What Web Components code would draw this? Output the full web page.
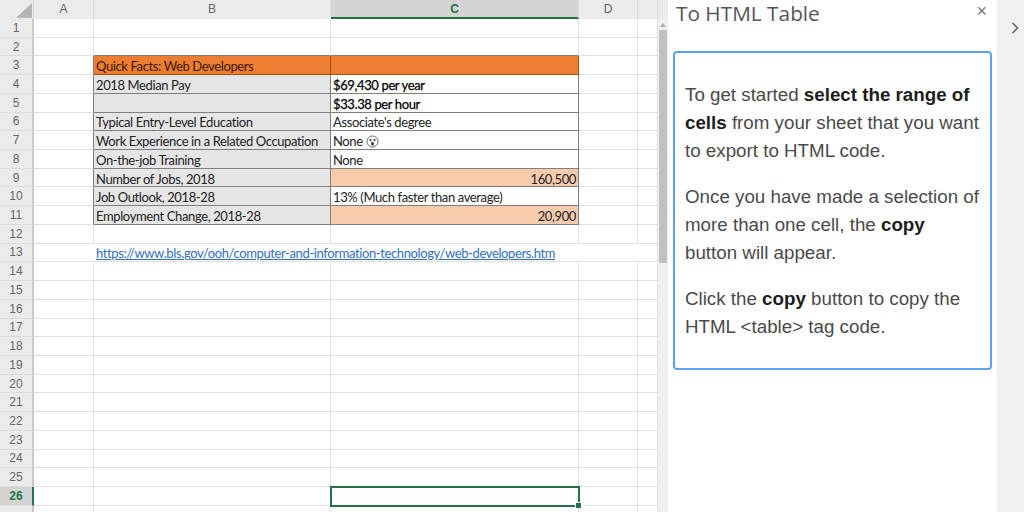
<!DOCTYPE html>
<html lang="en">
<head>
<meta charset="utf-8">
<title>To HTML Table</title>
<style>
  html, body { margin: 0; height: 100%; overflow: hidden; background: #fff; }
  info-card b { color: #1d1d1d; }
</style>
</head>
<body>
<app-shell>
  <sheet-view slot="sheet"></sheet-view>
  <task-pane slot="pane" heading="To HTML Table">
    <info-card>
      <p>To get started <b>select the range of cells</b> from your sheet that you want to export to HTML code.</p>
      <p>Once you have made a selection of more than one cell, the <b>copy</b> button will appear.</p>
      <p>Click the <b>copy</b> button to copy the HTML &lt;table&gt; tag code.</p>
    </info-card>
  </task-pane>
</app-shell>

<script>
/** Top level frame: sheet on the left, pane next to it, grey strip on the right. */
class AppShell extends HTMLElement {
  constructor() {
    super();
    this.attachShadow({ mode: "open" }).innerHTML = `
      <style>
        :host { display: flex; width: 1024px; height: 512px; overflow: hidden; }
        .strip {
          flex: 1;
          background: #f0f0f0;
          display: flex;
          justify-content: center;
          padding-top: 21px;
          align-items: flex-start;
        }
        .strip svg { margin-left: 9px; }
      </style>
      <slot name="sheet"></slot>
      <slot name="pane"></slot>
      <div class="strip">
        <svg width="8" height="14" viewBox="0 0 8 14" fill="none" stroke="#666" stroke-width="1.6"><path d="M1.5 2l5 5-5 5"/></svg>
      </div>
    `;
  }
}

const COLUMNS = [
  { name: "A", width: 60 },
  { name: "B", width: 237 },
  { name: "C", width: 248 },
  { name: "D", width: 59 },
  { name: "", width: 20 },
];

// row number -> column letter -> cell
const CELLS = {
  3: { B: { text: "Quick Facts: Web Developers", cls: "head" }, C: { cls: "head" } },
  4: { B: { text: "2018 Median Pay", cls: "label" }, C: { text: "$69,430 per year", cls: "strong" } },
  5: { B: { cls: "label" }, C: { text: "$33.38 per hour", cls: "strong" } },
  6: { B: { text: "Typical Entry-Level Education", cls: "label" }, C: { text: "Associate's degree", cls: "value" } },
  7: { B: { text: "Work Experience in a Related Occupation", cls: "label" }, C: { text: "None", cls: "value", face: true } },
  8: { B: { text: "On-the-job Training", cls: "label" }, C: { text: "None", cls: "value" } },
  9: { B: { text: "Number of Jobs, 2018", cls: "label" }, C: { text: "160,500", cls: "peach" } },
  10: { B: { text: "Job Outlook, 2018-28", cls: "label" }, C: { text: "13% (Much faster than average)", cls: "value" } },
  11: { B: { text: "Employment Change, 2018-28", cls: "label" }, C: { text: "20,900", cls: "peach" } },
  13: { B: { text: "https://www.bls.gov/ooh/computer-and-information-technology/web-developers.htm", cls: "link" } },
};

const FACE = `<svg class="face" width="13" height="13" viewBox="0 0 13 13" fill="none" stroke="#666" stroke-width="1">
  <circle cx="6.5" cy="6.5" r="5.5"/><circle cx="4.5" cy="5" r="1.1" fill="#333" stroke="none"/>
  <circle cx="8.5" cy="5" r="1.1" fill="#333" stroke="none"/><ellipse cx="6.5" cy="8.7" rx="1.5" ry="2" fill="#444" stroke="none"/>
</svg>`;

/** The spreadsheet: headers, gridlines, cells and the scrollbar. */
class SheetView extends HTMLElement {
  constructor() {
    super();
    this.attachShadow({ mode: "open" }).innerHTML = `
      <style>
        :host { display: flex; width: 668px; height: 512px; overflow: hidden; background: #fff; }
        * { box-sizing: border-box; }
        .grid {
          display: grid;
          width: 658px;
          grid-template-columns: 34px ${COLUMNS.map(c => c.width + "px").join(" ")};
          grid-template-rows: 19px repeat(27, 18.72px);
          font: 13px/18px Lato, "Open Sans", sans-serif;
          letter-spacing: -0.38px;
          color: #222;
        }
        .corner, .col, .row {
          background: #ebebeb;
          font-family: "Liberation Sans", sans-serif;
          font-size: 12px;
          letter-spacing: 0;
          color: #666;
          display: flex;
          align-items: center;
          justify-content: center;
        }
        .corner { position: relative; border-right: 1px solid #dcdcdc; }
        .corner svg { position: absolute; right: 1px; bottom: 1px; }
        .col { border-right: 1px solid #dedede; padding-bottom: 2px; }
        .col.on {
          background: #d4d4d4;
          color: #217346;
          font-weight: bold;
          border-bottom: 2px solid #217346;
          padding-bottom: 0;
        }
        .row { border-right: 2px solid #c8c8c8; border-bottom: 1px solid #dcdcdc; }
        .row.on { background: #d4d4d4; color: #217346; font-weight: bold; border-right-color: #217346; }
        .cell {
          position: relative;
          border-right: 1px solid #e0e0e0;
          border-bottom: 1px solid #e0e0e0;
          padding: 2px 2px 0;
          white-space: nowrap;
          display: flex;
          align-items: center;
          min-width: 0;
        }
        .table-edge { border-right-color: #7f7f7f; }
        .table-top { border-bottom-color: #7f7f7f; }
        .head { background: #ed7d31; border-color: #a9500f; color: #3a1a05; }
        .label { background: #e5e5e5; border-color: #7f7f7f; }
        .value { border-color: #7f7f7f; }
        .strong { border-color: #7f7f7f; color: #000; -webkit-text-stroke: 0.25px #000; }
        .peach { background: #f8cbad; border-color: #7f7f7f; justify-content: flex-end; }
        .link { color: #2f6fc4; text-decoration: underline; }
        .open { border-right-color: transparent; }
        .face { margin-left: 3px; }
        .picked { outline: 2px solid #217346; outline-offset: -1px; z-index: 1; }
        .picked i {
          position: absolute;
          right: -3px;
          bottom: -3px;
          width: 5px;
          height: 5px;
          background: #217346;
          outline: 1px solid #fff;
        }
        .bar { width: 10px; background: #f0f0f0; display: flex; flex-direction: column; align-items: center; }
        .bar .top { height: 19px; width: 100%; background: #ebebeb; }
        .bar svg { margin: 4px 0 3px; }
        .thumb { width: 8px; height: 233px; background: #c0c0c0; }
      </style>
      <div class="grid"></div>
      <div class="bar">
        <div class="top"></div>
        <svg width="6" height="4" viewBox="0 0 6 4"><path d="M3 0l3 4H0z" fill="#aaa"/></svg>
        <div class="thumb"></div>
      </div>
    `;
    this.renderGrid(this.shadowRoot.querySelector(".grid"));
  }

  /**
   * Fills the grid, one header row then 27 data rows.
   * @private
   */
  renderGrid(grid) {
    let html = `<div class="corner"><svg width="16" height="15"><path d="M16 0v15H0z" fill="#b4b4b4"/></svg></div>`;
    html += COLUMNS.map(c => `<div class="col ${c.name === "C" ? "on" : ""}">${c.name}</div>`).join("");

    for (let row = 1; row <= 26; row++) {
      html += `<div class="row ${row === 26 ? "on" : ""}">${row}</div>`;
      COLUMNS.forEach((col, i) => {
        const data = (CELLS[row] || {})[col.name] || {};
        const classes = ["cell"];
        if (data.cls) classes.push(data.cls);
        if (row >= 3 && row <= 11 && col.name === "A") classes.push("table-edge");
        if (row === 2 && (col.name === "B" || col.name === "C")) classes.push("table-top");
        if (row === 13 && i < 4) classes.push("open");
        if (row === 26 && col.name === "C") classes.push("picked");
        const inner = (data.text || "") + (data.face ? FACE : "") + (classes.includes("picked") ? "<i></i>" : "");
        html += `<div class="${classes.join(" ")}">${inner}</div>`;
      });
    }
    // bottom row is clipped by the window, so no number is drawn in it
    html += `<div class="row"></div>` + COLUMNS.map(() => `<div class="cell"></div>`).join("");
    grid.innerHTML = html;
  }
}

/** Side pane with a title, a close button and slotted content. */
class TaskPane extends HTMLElement {
  constructor() {
    super();
    this.attachShadow({ mode: "open" }).innerHTML = `
      <style>
        :host {
          display: flex;
          flex-direction: column;
          box-sizing: border-box;
          width: 329px;
          height: 512px;
          padding: 0 5px;
          background: #fff;
        }
        header {
          display: flex;
          justify-content: space-between;
          align-items: flex-start;
          height: 51px;
          padding: 0 5px 0 3px;
        }
        h1 {
          margin: 0;
          font: 400 20.8px/26px "Open Sans", sans-serif;
          color: #555;
        }
        button {
          margin: 2px 0 0;
          padding: 0;
          border: 0;
          background: none;
          font: 18px/18px "Liberation Sans", sans-serif;
          color: #777;
        }
      </style>
      <header>
        <h1></h1>
        <button>×</button>
      </header>
      <slot></slot>
    `;
    this.shadowRoot.querySelector("h1").textContent = this.getAttribute("heading");
  }
}

/** Blue outlined box for the instructions. */
class InfoCard extends HTMLElement {
  constructor() {
    super();
    this.attachShadow({ mode: "open" }).innerHTML = `
      <style>
        :host {
          display: block;
          box-sizing: border-box;
          height: 319px;
          padding: 28px 10px 0;
          border: 2px solid #5ba4ef;
          border-radius: 4px;
          font: 18.75px/28px "Liberation Sans", Arial, sans-serif;
          color: #4a4a4a;
        }
        ::slotted(p) { margin: 0 0 18px; }
      </style>
      <slot></slot>
    `;
  }
}

customElements.define("app-shell", AppShell);
customElements.define("sheet-view", SheetView);
customElements.define("task-pane", TaskPane);
customElements.define("info-card", InfoCard);
</script>
</body>
</html>
